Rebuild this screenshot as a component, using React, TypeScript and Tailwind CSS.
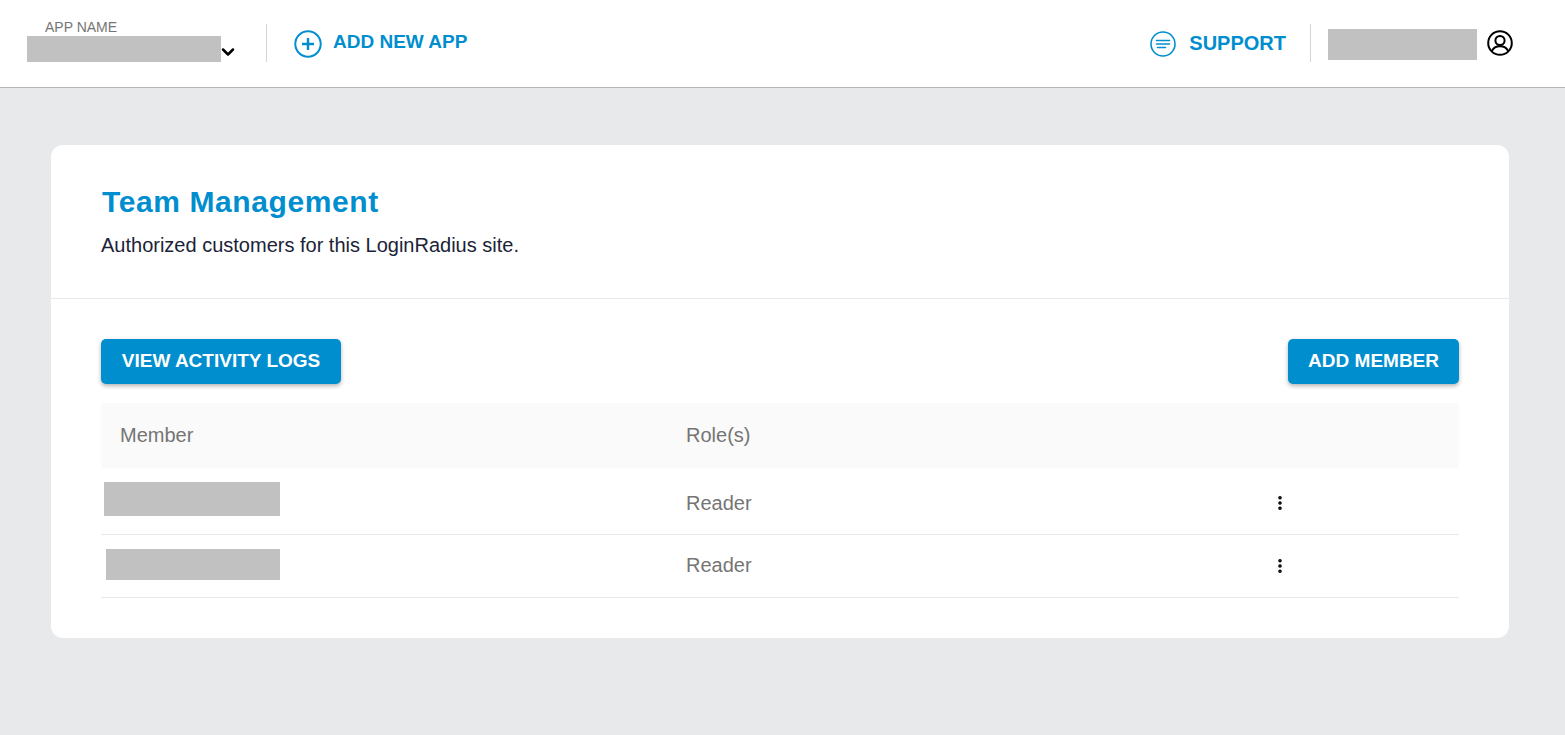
import { EllipsisVertical, ChevronDown } from "lucide-react";

const members = [
    { key: "first", height: "h-[67px] pt-[3px]", rolePad: "", box: "ml-[3px] w-[176px] h-[34px] -mt-[7px]", role: "Reader" },
    { key: "second", height: "h-[63px]", rolePad: "-mt-[2px]", box: "ml-[5px] w-[174px] h-[31px] -mt-[3px]", role: "Reader" },
];

const PlusCircle = () => (
    <svg width="28" height="28" viewBox="0 0 28 28" fill="none" stroke="#008ecf" strokeWidth="2">
        <circle cx="14" cy="14" r="12.7" />
        <path d="M14 8v12M8 14h12" strokeWidth="2.4" />
    </svg>
);

const SupportIcon = () => (
    <svg width="26" height="26" viewBox="0 0 26 26" fill="none" stroke="#008ecf" strokeWidth="1.6" strokeLinecap="round">
        <circle cx="13" cy="13" r="12" />
        <path d="M6.5 9.5h13M6.5 13h13M7.5 16.5h8" />
    </svg>
);

const UserIcon = () => (
    <svg width="26" height="26" viewBox="0 0 26 26" fill="none" stroke="#000" strokeWidth="2">
        <circle cx="13" cy="13" r="11.8" />
        <circle cx="13" cy="10.5" r="4.6" />
        <path d="M4.8 21c1.6-3.4 4.6-4.8 8.2-4.8s6.6 1.4 8.2 4.8" />
    </svg>
);

export default function App() {
    return (
        <div className="min-h-screen bg-[#e8e9eb] font-['Liberation_Sans',Arial,sans-serif]">
            <header className="flex h-[88px] items-center justify-between border-b border-[#b5b5b5] bg-white">
                <div className="flex items-center pl-[27px]">
                    <div className="w-[207px] -mt-[4px]">
                        <div className="pl-[18px] text-[14px] leading-[15px] text-[#757575] -mt-[1px] mb-[1px]">APP NAME</div>
                        <div className="flex items-end">
                            <div className="h-[26px] w-[194px] shrink-0 bg-[#c1c1c1]" />
                            <ChevronDown size={20} strokeWidth={3} className="shrink-0 text-black -ml-[3px]" />
                        </div>
                    </div>
                    <div className="ml-[32px] h-[38px] w-px bg-[#d4d4d4] -mt-[1px]" />
                    <div className="ml-[27px] flex items-center gap-[11px]">
                        <PlusCircle />
                        <span className="text-[19px] font-bold text-[#008ecf] -mt-[3px]">ADD NEW APP</span>
                    </div>
                </div>
                <div className="flex items-center pr-[52px]">
                    <div className="flex items-center gap-[13px]">
                        <SupportIcon />
                        <span className="text-[20px] font-bold text-[#008ecf] -mt-[2px]">SUPPORT</span>
                    </div>
                    <div className="ml-[24px] h-[38px] w-px bg-[#d4d4d4] -mt-[1px]" />
                    <div className="ml-[17px] h-[31px] w-[149px] bg-[#c1c1c1] mt-[2px]" />
                    <div className="ml-[10px] -mt-[2px]">
                        <UserIcon />
                    </div>
                </div>
            </header>

            <main className="pl-[51px] pr-[56px] pt-[57px] pb-[97px]">
                <div className="rounded-[12px] bg-white">
                    <div className="h-[154px] border-b border-[#e8e9eb] pl-[51px] pt-[39px]">
                        <h1 className="text-[30px] font-bold leading-[36px] tracking-[0.6px] text-[#008ecf]">Team Management</h1>
                        <p className="mt-[13px] -ml-px text-[20px] leading-[24px] text-[#1b2338]">
                            Authorized customers for this LoginRadius site.
                        </p>
                    </div>

                    <div className="px-[50px] pt-[40px] pb-[40px]">
                        <div className="flex justify-between">
                            <button className="h-[45px] w-[240px] rounded-[5px] bg-[#008ecf] text-[19px] font-bold text-white shadow-[0_2px_4px_rgba(0,0,0,0.3)]">
                                VIEW ACTIVITY LOGS
                            </button>
                            <button className="h-[45px] rounded-[5px] bg-[#008ecf] px-[20px] text-[19px] font-bold text-white shadow-[0_2px_4px_rgba(0,0,0,0.3)]">
                                ADD MEMBER
                            </button>
                        </div>

                        <div className="mt-[19px] flex h-[65px] items-center bg-[#fafafa] pb-[2px] text-[20px] text-[#757575]">
                            <div className="w-[585px] pl-[19px]">Member</div>
                            <div>Role(s)</div>
                        </div>

                        {members.map((member) => (
                            <div key={member.key} className={`flex items-center border-b border-[#e8e9eb] text-[20px] text-[#757575] ${member.height}`}>
                                <div className="w-[585px]">
                                    <div className={`bg-[#c1c1c1] ${member.box}`} />
                                </div>
                                <div className={`w-[585px] ${member.rolePad}`}>{member.role}</div>
                                <EllipsisVertical size={18} strokeWidth={2.8} className="text-black" />
                            </div>
                        ))}
                    </div>
                </div>
            </main>
        </div>
    );
}
